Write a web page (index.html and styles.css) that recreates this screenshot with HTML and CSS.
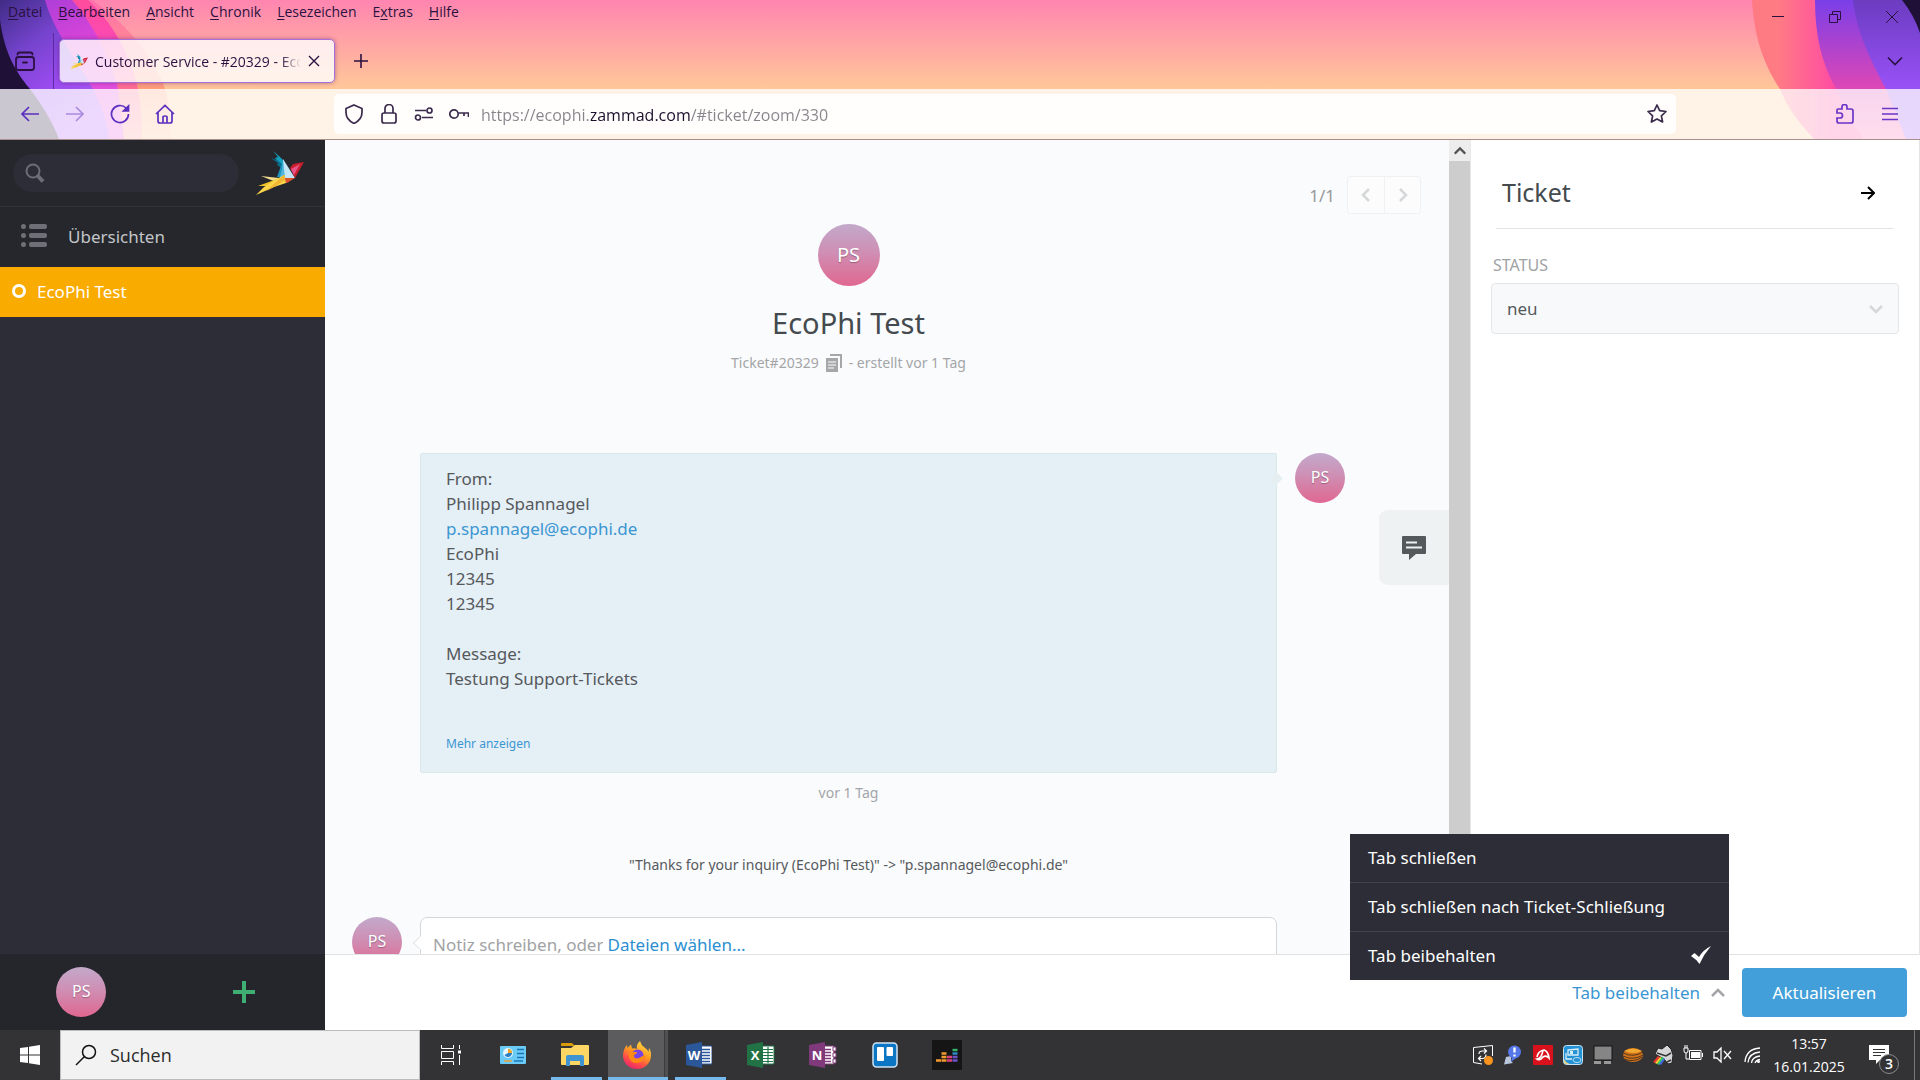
FILE: index.html
```html
<!DOCTYPE html>
<html lang="de">
  <head>
    <meta charset="utf-8" />
    <meta name="viewport" content="width=device-width,initial-scale=1.0" />
    <title>Customer Service - #20329 - EcoPhi Test</title>
    <link rel="stylesheet" href="styles.css">
  </head>
  <body>
    <svg width="0" height="0" class="sprite" aria-hidden="true">
      <symbol id="bird" viewBox="0 0 48 44">
        <path d="M17 0l6 5 5 5-1 6-8-9 3-1z" fill="#12a0be" />
        <path d="M15 7l6 2 5 4 1 5-6-4 1-2z" fill="#0a6d8c" />
        <path d="M26 12l-5 14 8 1z" fill="#1d93bd" />
        <path d="M27 8l12 19H29l-2-7z" fill="#c3e6f6" />
        <path d="M27 8l2 19-5-1 2-8z" fill="#4fb6dc" />
        <path d="M48 11l-11 2-3 4 5 10z" fill="#c81f2c" />
        <path d="M44 13l-9 5 3 6z" fill="#e8548a" />
        <path d="M29 27h10l-8 5-5 0z" fill="#d9522b" />
        <path d="M5 25l18 2-3 4z" fill="#f3dc8d" />
        <path d="M2 35l19-7 8-4-1 5-9 6z" fill="#f0c52b" />
        <path d="M28 24l2 8-12 4L0 44l8-8z" fill="#fbd54a" />
        <path d="M28 24l1 5-9 6-10 5 9-8z" fill="#f2b534" />
      </symbol>
      <symbol id="chevron" viewBox="0 0 16 16">
        <path d="M2 5l6 6 6-6" fill="none" stroke="currentColor" stroke-width="2.5" />
      </symbol>
    </svg>

    <header class="browser">
      <svg class="art art-left" width="200" height="139" viewBox="0 0 200 139" aria-hidden="true">
        <defs>
          <linearGradient id="l1" x1="0" y1="0" x2="0" y2="1">
            <stop offset="0" stop-color="#ff6fae" />
            <stop offset=".65" stop-color="#ffa07a" />
            <stop offset="1" stop-color="#ffbd8c" />
          </linearGradient>
          <linearGradient id="l2" x1="0" y1="0" x2="0" y2="1">
            <stop offset="0" stop-color="#ff4c9c" />
            <stop offset=".3" stop-color="#fb49b4" />
            <stop offset=".65" stop-color="#ff7094" />
            <stop offset="1" stop-color="#ffa09c" />
          </linearGradient>
          <linearGradient id="l3" x1=".5" y1="0" x2=".8" y2="1">
            <stop offset="0" stop-color="#b23fd8" />
            <stop offset=".35" stop-color="#dd45d8" />
            <stop offset="1" stop-color="#e85ae0" />
          </linearGradient>
          <linearGradient id="l4" x1="0" y1="0" x2=".6" y2="1">
            <stop offset="0" stop-color="#3f2c86" />
            <stop offset=".35" stop-color="#7443cc" />
            <stop offset=".65" stop-color="#9a4bee" />
            <stop offset="1" stop-color="#ae5cf4" />
          </linearGradient>
        </defs>
        <path d="M0 0h92c30 20 62 55 73 89 4 15 6 30 6 50H0z" fill="url(#l1)" />
        <path d="M0 0h88c22 20 42 52 50 89 3 16 4 32 4 50H0z" fill="url(#l2)" />
        <path d="M0 0h72c18 20 38 55 46 89l6 50H0z" fill="url(#l3)" />
        <path d="M0 0h45c8 30 32 60 48 89 9 18 14 34 16 50H0z" fill="url(#l4)" />
        <path d="M0 20c4 30 14 50 30 69 12 16 22 32 29 50H0z" fill="#1f1038" />
      </svg>
      <svg class="art art-right" width="200" height="139" viewBox="0 0 200 139" aria-hidden="true">
        <defs>
          <linearGradient id="r1" x1="0" y1="0" x2="1" y2="0">
            <stop offset=".15" stop-color="#ff7b84" />
            <stop offset=".5" stop-color="#ff4ba4" />
          </linearGradient>
          <linearGradient id="r2" x1="0" y1="0" x2="0" y2="1">
            <stop offset="0" stop-color="#7a3fe8" />
            <stop offset=".6" stop-color="#d846b8" />
            <stop offset="1" stop-color="#ff6cb0" />
          </linearGradient>
          <linearGradient id="r3" x1="0" y1="0" x2="0" y2="1">
            <stop offset="0" stop-color="#6b3cc0" />
            <stop offset=".6" stop-color="#9650f4" />
            <stop offset="1" stop-color="#9a58f0" />
          </linearGradient>
        </defs>
        <path d="M32 0c2 34 10 62 28 89 8 20 20 35 34 50h106V0z" fill="url(#r1)" />
        <path d="M95 0c0 34 6 62 21 89 8 20 16 34 28 50h56V0z" fill="url(#r2)" />
        <path d="M133 0c4 34 18 60 33 89l20 50h14V0z" fill="url(#r3)" />
        <path d="M182 0c8 10 14 21 18 33V0z" fill="#1f1038" />
      </svg>

      <div class="menubar">
        <nav class="menus">
          <a href="#"><u>D</u>atei</a>
          <a href="#"><u>B</u>earbeiten</a>
          <a href="#"><u>A</u>nsicht</a>
          <a href="#"><u>C</u>hronik</a>
          <a href="#"><u>L</u>esezeichen</a>
          <a href="#">E<u>x</u>tras</a>
          <a href="#"><u>H</u>ilfe</a>
        </nav>
        <div class="window-buttons">
          <button type="button" aria-label="Minimieren">
            <svg width="14" height="14" viewBox="0 0 14 14"><path d="M1 6.500h12" stroke="currentColor" /></svg>
          </button>
          <button type="button" aria-label="Verkleinern">
            <svg width="14" height="14" viewBox="0 0 14 14"><path d="M1.500 4.500h8v8h-8zM4.500 4.500v-3h8v8h-3" fill="none" stroke="currentColor" /></svg>
          </button>
          <button type="button" aria-label="Schließen">
            <svg width="14" height="14" viewBox="0 0 14 14"><path d="M1 1l12 12M13 1L1 13" stroke="currentColor" /></svg>
          </button>
        </div>
      </div>

      <div class="tabbar">
        <button type="button" class="recent" aria-label="Tabs">
          <svg width="20" height="20" viewBox="0 0 20 20" fill="none" stroke="currentColor" stroke-width="1.800" stroke-linecap="round">
            <path d="M2.500 3.500q0-2 2-2h11q2 0 2 2M8 11.500h4" />
            <rect x="1" y="6" width="18" height="13" rx="2.500" />
          </svg>
        </button>
        <div class="tab">
          <svg width="18" height="17"><use href="#bird" /></svg>
          <span class="tab-title">Customer Service - #20329 - EcoPhi Test</span>
          <button type="button" aria-label="Tab schließen">
            <svg width="12" height="12" viewBox="0 0 12 12"><path d="M1 1l10 10M11 1L1 11" stroke="currentColor" stroke-width="1.400" /></svg>
          </button>
        </div>
        <button type="button" class="new-tab" aria-label="Neuer Tab">
          <svg width="16" height="16" viewBox="0 0 16 16"><path d="M8 1v14M1 8h14" stroke="currentColor" stroke-width="1.600" /></svg>
        </button>
        <button type="button" class="all-tabs" aria-label="Alle Tabs">
          <svg width="18" height="18" viewBox="0 0 18 18"><path d="M2 5.500l7 7 7-7" fill="none" stroke="currentColor" stroke-width="1.600" /></svg>
        </button>
      </div>

      <div class="toolbar">
        <div class="nav-buttons">
          <button type="button" aria-label="Zurück">
            <svg width="20" height="20" viewBox="0 0 20 20"><path d="M19 10H2M9 3l-7 7 7 7" /></svg>
          </button>
          <button type="button" class="faded" aria-label="Vor">
            <svg width="20" height="20" viewBox="0 0 20 20"><path d="M1 10h17M11 3l7 7-7 7" /></svg>
          </button>
          <button type="button" aria-label="Neu laden">
            <svg width="20" height="20" viewBox="0 0 20 20"><path d="M18.500 10A8.500 8.500 0 1 1 16 4l2 2" /><path d="M18.500 2v5h-5z" fill="currentColor" /></svg>
          </button>
          <button type="button" aria-label="Startseite">
            <svg width="20" height="20" viewBox="0 0 20 20"><path d="M1 10l9-8.500L19 10M3 8.500V17q0 2 2 2h10q2 0 2-2V8.500M8 19v-6q0-1 2-1t2 1v6" /></svg>
          </button>
        </div>
        <div class="urlbar">
          <svg width="20" height="20" viewBox="0 0 20 20"><path d="M10 1l8 3.500v4C18 14 14 17.500 10 19.500 6 17.500 2 14 2 8.500v-4z" /></svg>
          <svg width="20" height="20" viewBox="0 0 20 20"><rect x="3" y="9" width="14" height="10" rx="2" /><path d="M6 9V4.500a4 4 0 0 1 8 0V9" /></svg>
          <svg width="20" height="20" viewBox="0 0 20 20"><path d="M1 6.500h11M8 13.500h11" /><circle cx="15.500" cy="6.500" r="2.500" /><circle cx="4" cy="13.500" r="2.500" /></svg>
          <svg width="20" height="20" viewBox="0 0 20 20"><circle cx="5" cy="10" r="4.200" /><path d="M9.500 9h10v4M15 9v3" /></svg>
          <input type="text" class="url" aria-label="Adresse" value="https://ecophi.zammad.com/#ticket/zoom/330">
          <svg width="20" height="20" viewBox="0 0 20 20"><path d="M10 1l2.700 5.700 6.300.8-4.600 4.300 1.200 6.200L10 15l-5.600 3 1.200-6.200L1 7.500l6.300-.8z" stroke-linejoin="round" /></svg>
        </div>
        <div class="tool-buttons">
          <button type="button" aria-label="Erweiterungen">
            <svg width="20" height="20" viewBox="0 0 20 20"><path d="M3 5h4V3a2.500 2.500 0 0 1 5 0v2h4q2 0 2 2v10q0 2-2 2H4q-2 0-2-2v-3h3a2 2 0 0 0 0-5H2V6q0-1 1-1z" /></svg>
          </button>
          <button type="button" aria-label="Menü">
            <svg width="16" height="16" viewBox="0 0 16 16"><path d="M0 2.500h16M0 8h16M0 13.500h16" /></svg>
          </button>
        </div>
      </div>
    </header>

    <div class="app">
      <aside class="sidebar">
        <div class="search-row">
          <label class="search">
            <svg width="20" height="20" viewBox="0 0 20 20"><circle cx="8" cy="8" r="6.500" fill="none" stroke="currentColor" stroke-width="2" /><path d="M12 12l6 6.500" stroke="currentColor" stroke-width="4" /></svg>
            <input type="search" aria-label="Suche">
          </label>
          <svg width="48" height="44"><use href="#bird" /></svg>
        </div>
        <a class="overview" href="#">
          <svg width="26" height="24" viewBox="0 0 26 24" fill="currentColor">
            <rect y="0" width="5" height="5" rx="2.500" /><rect x="8" y="0" width="18" height="5" rx="2" />
            <rect y="9" width="5" height="5" rx="2.500" /><rect x="8" y="9" width="18" height="5" rx="2" />
            <rect y="18" width="5" height="5" rx="2.500" /><rect x="8" y="18" width="18" height="5" rx="2" />
          </svg>
          Übersichten
        </a>
        <a class="task" href="#"><span class="ring"></span>EcoPhi Test</a>
        <div class="sidebar-footer">
          <span class="avatar">PS</span>
          <button type="button" aria-label="Neu">
            <svg width="22" height="22" viewBox="0 0 22 22"><path d="M11 0v22M0 11h22" stroke="#3fae72" stroke-width="4" /></svg>
          </button>
        </div>
      </aside>

      <div class="workspace">
        <div class="columns">
          <main class="ticket">
            <div class="pager">
              <span>1/1</span>
              <div class="pager-buttons">
                <button type="button" aria-label="Vorheriges"><svg width="16" height="16" class="turn-right"><use href="#chevron" /></svg></button>
                <button type="button" aria-label="Nächstes"><svg width="16" height="16" class="turn-left"><use href="#chevron" /></svg></button>
              </div>
            </div>
            <div class="ticket-head">
              <span class="avatar large">PS</span>
              <h1>EcoPhi Test</h1>
              <p class="meta">
                Ticket#20329
                <svg width="16" height="18" viewBox="0 0 16 18"><path d="M4 0h12v14h-2V2H4z" fill="#a5a7a9" /><path d="M0 4h12v14H0z" fill="#a5a7a9" /><path d="M2 8h8M2 11h8M2 14h6" stroke="#fff" /></svg>
                - erstellt vor 1 Tag
              </p>
            </div>
            <div class="article">
              <div class="bubble">
                <p>
                  From:<br>
                  Philipp Spannagel<br>
                  <a href="#">p.spannagel@ecophi.de</a><br>
                  EcoPhi<br>
                  12345<br>
                  12345<br>
                  <br>
                  Message:<br>
                  Testung Support-Tickets
                </p>
                <a class="more" href="#">Mehr anzeigen</a>
              </div>
              <span class="avatar">PS</span>
            </div>
            <p class="meta time">vor 1 Tag</p>
            <p class="notice">"Thanks for your inquiry (EcoPhi Test)" -&gt; "p.spannagel@ecophi.de"</p>
            <div class="article reply">
              <span class="avatar">PS</span>
              <div class="note">
                <input type="text" aria-label="Notiz" placeholder="Notiz schreiben, oder">
                <a href="#">Dateien wählen...</a>
              </div>
            </div>
            <button type="button" class="drawer" aria-label="Textbausteine">
              <svg width="24" height="24" viewBox="0 0 24 24"><path d="M1 0h22q1 0 1 1v16q0 1-1 1H14l-7 6v-6H1q-1 0-1-1V1q0-1 1-1z" fill="#54595c" /><path d="M4 6.500h11M4 11.500h16" stroke="#eef2f2" stroke-width="2" /></svg>
            </button>
          </main>
          <div class="scrollbar">
            <button type="button" aria-label="Nach oben"><svg width="14" height="14" class="turn-up"><use href="#chevron" /></svg></button>
          </div>
          <aside class="properties">
            <div class="properties-head">
              <h2>Ticket</h2>
              <svg width="14" height="14" viewBox="0 0 14 14"><path d="M0 7h13M7 1l6 6-6 6" fill="none" stroke="#000" stroke-width="2" /></svg>
            </div>
            <label for="state">STATUS</label>
            <div class="select">
              <select id="state"><option>neu</option></select>
              <svg width="16" height="16"><use href="#chevron" /></svg>
            </div>
          </aside>
        </div>

        <footer class="actions">
          <ul class="menu">
            <li><button type="button">Tab schließen</button></li>
            <li><button type="button">Tab schließen nach Ticket-Schließung</button></li>
            <li>
              <button type="button">Tab beibehalten
                <svg width="20" height="18" viewBox="0 0 20 18"><path d="M0 10l3.500-3L8 11Q12 4 20 0 13 8 8.500 18 5 13 0 10z" fill="#fff" /></svg>
              </button>
            </li>
          </ul>
          <a class="tab-action" href="#">Tab beibehalten <svg width="16" height="16" class="turn-up"><use href="#chevron" /></svg></a>
          <button type="button" class="submit">Aktualisieren</button>
        </footer>
      </div>
    </div>

    <footer class="taskbar">
      <button type="button" class="start" aria-label="Start">
        <svg width="20" height="20" viewBox="0 0 20 20"><path d="M0 3l8-1v7.500H0zM9 1.800L20 0v9.500H9zM0 10.500h8V18l-8-1zM9 10.500h11V20L9 18.200z" fill="#fff" /></svg>
      </button>
      <label class="win-search">
        <svg width="22" height="22" viewBox="0 0 22 22"><circle cx="14" cy="8" r="6.500" fill="none" stroke="#111" stroke-width="1.500" /><path d="M9.500 12.500L1 21" stroke="#111" stroke-width="1.500" /></svg>
        <input type="text" placeholder="Suchen">
      </label>
      <div class="pinned">
        <button type="button" aria-label="Aktive Anwendungen">
          <svg width="20" height="20" viewBox="0 0 20 20" fill="none" stroke="#fff"><path d="M.5 0v3.500h12V0M.5 20v-3.500h12V20M.5 6.500h12v7H.5zM18.500 0v4M18.500 10v10" /><path d="M17 5.500h3v3h-3z" fill="#fff" stroke="none" /></svg>
        </button>
        <button type="button" aria-label="Systemsteuerung">
          <svg width="26" height="18" viewBox="0 0 26 18"><rect width="26" height="18" rx="1" fill="#6ccbf5" /><circle cx="8" cy="7" r="5" fill="#e4f5fd" /><path d="M8 7V3a4 4 0 1 1-3.500 6z" fill="#2d7fc4" /><path d="M8 7V3a4 4 0 0 1 4 4z" fill="#f5a623" /><path d="M17 3.500h7M17 7.500h7M17 11.500h7" stroke="#1877b8" stroke-width="1.500" /><path d="M4 15h8" stroke="#e8a33a" stroke-width="1.500" /><path d="M14 15h9" stroke="#1877b8" stroke-width="1.500" /></svg>
        </button>
        <button type="button" class="running" aria-label="Explorer">
          <svg width="28" height="24" viewBox="0 0 28 24"><path d="M0 1q0-1 1-1h10l3 3H0z" fill="#d99a06" /><path d="M0 5h10l4-3h13q1 0 1 1v18q0 1-1 1H1q-1 0-1-1z" fill="#fdd663" /><path d="M5 23V14q0-2 2-2h14q2 0 2 2v9h-4v-5H9v5z" fill="#3f93d0" /></svg>
        </button>
        <button type="button" class="running current" aria-label="Firefox">
          <svg width="28" height="28" viewBox="0 0 28 28">
            <defs>
              <linearGradient id="ff" x1=".8" y1="0" x2=".3" y2="1"><stop offset="0" stop-color="#ffe14a" /><stop offset=".45" stop-color="#ff9a1f" /><stop offset=".75" stop-color="#ff4a4a" /><stop offset="1" stop-color="#e8246e" /></linearGradient>
            </defs>
            <path d="M14 28C6 28 0 22 0 14.500 0 10 2 6 4 4l.5 3L8 3.500l1 4q3-.5 5 .5-1-5 3-8 1 4 4 6 4 3 4.500 5l.5-4c2 3 2 5 2 7.500C28 22 22 28 14 28z" fill="url(#ff)" />
            <circle cx="14.500" cy="14.500" r="6" fill="#7542e5" />
            <path d="M6 12c3-2 5-1 8-1 1 2-3 2-3 4s2 3 5 2 3-3 6-2c-1 5-5 7-9 7-5 0-8-5-7-10z" fill="#ff8a16" />
          </svg>
        </button>
        <button type="button" class="running" aria-label="Word">
          <svg width="26" height="26" viewBox="0 0 26 26"><path d="M14 4h11q1 0 1 1v16q0 1-1 1H14z" fill="#fff" stroke="#2b579a" /><path d="M16 7.500h8M16 10.500h8M16 13.500h8M16 16.500h8M16 19.500h8" stroke="#2b579a" stroke-width="1.500" /><path d="M0 3l16-3v26L0 23z" fill="#2b579a" /><text x="8" y="18" class="app-letter">W</text></svg>
        </button>
        <button type="button" aria-label="Excel">
          <svg width="28" height="26" viewBox="0 0 28 26"><path d="M14 4h12q1 0 1 1v16q0 1-1 1H14z" fill="#fff" stroke="#217346" /><path d="M16 7.500h10M16 10.500h10M16 13.500h10M16 16.500h10M16 19.500h10M21 5v16" stroke="#217346" stroke-width="1.200" /><path d="M0 3l16-3v26L0 23z" fill="#217346" /><text x="8" y="18" class="app-letter">X</text></svg>
        </button>
        <button type="button" aria-label="OneNote">
          <svg width="28" height="26" viewBox="0 0 28 26"><path d="M14 4h11v18H14z" fill="#fff" stroke="#80397b" /><path d="M16 7.500h6M16 10.500h6M16 13.500h6M16 16.500h6M16 19.500h6" stroke="#80397b" stroke-width="1.500" /><path d="M24 5h3v4h-3zM24 11h3v4h-3zM24 17h3v4h-3z" fill="#fff" stroke="#80397b" /><path d="M0 3l16-3v26L0 23z" fill="#80397b" /><text x="8" y="18" class="app-letter">N</text></svg>
        </button>
        <button type="button" aria-label="Trello">
          <svg width="26" height="26" viewBox="0 0 26 26"><rect x="1" y="1" width="24" height="24" rx="3.500" fill="#0a76c4" stroke="#cfe5f5" stroke-width="1.500" /><rect x="5" y="5" width="7" height="14" rx="1" fill="#fff" /><rect x="14.500" y="5" width="6.500" height="9" rx="1" fill="#fff" /></svg>
        </button>
        <button type="button" aria-label="Deezer">
          <svg width="30" height="30" viewBox="0 0 30 30"><path d="M0 0h30v30H0z" fill="#151515" /><g stroke-width="2.400"><path d="M4 20.500h5M9.500 20.500h5M9.500 17h5M9.500 13.500h5" stroke="#f29a2e" /><path d="M15 20.500h5M15 17h5" stroke="#d8437c" /><path d="M20.500 20.500h5M20.500 17h5" stroke="#6c52c8" /><path d="M20.500 13.500h5" stroke="#2e8fd0" /><path d="M20.500 10h5" stroke="#35b56a" /></g></svg>
        </button>
      </div>
      <div class="tray">
        <svg viewBox="0 0 20 20"><path d="M9 19l-8.500-1.500v-15l19-2V11" fill="none" stroke="#fff" /><path d="M6 9q0-3 3.500-3H13M11 3.500L13.500 6 11 8.500M13 9.500q0 4-3.500 4H6M8 11l-2.500 2.500L8 16" fill="none" stroke="#fff" stroke-width="1.200" /><circle cx="15.500" cy="15.500" r="4.500" fill="#f7931e" /></svg>
        <svg viewBox="0 0 20 20"><path d="M3 12l5-1v5l2 2-9 1.500z" fill="#b9c6de" /><circle cx="11.500" cy="7" r="6.500" fill="#5577e8" /><path d="M9 12l-1 5 5-4z" fill="#5577e8" /><path d="M11.500 2.500v5M11.500 9.500v2" stroke="#fff" stroke-width="2.300" /></svg>
        <svg viewBox="0 0 20 20"><rect width="20" height="20" rx="1" fill="#d8111c" /><path d="M4 12q1-6 7-7 4 1 5 8-3-3-6-1-3 4-6 2 5-1 6-9" fill="none" stroke="#fff" stroke-width="1.700" /></svg>
        <svg viewBox="0 0 20 20"><rect x=".5" y=".5" width="19" height="19" rx="3" fill="#2492d4" stroke="#c7e4f6" /><path d="M5 5l10-1v6H5zM3 8v6h6" fill="none" stroke="#d7edf9" stroke-width="1.300" /><path d="M7 6h3v3H7z" fill="#d7edf9" /><ellipse cx="14" cy="15" rx="4" ry="2.500" fill="#2492d4" stroke="#b8def4" /><path d="M1 14q2 4 6 5H3q-2 0-2-2z" fill="#e8d98a" /></svg>
        <svg viewBox="0 0 20 20"><path d="M1 1h18v14H1z" fill="#858585" stroke="#151515" /><path d="M1 16h7v3H1zM11 16h7v3h-7z" fill="#999" /></svg>
        <svg viewBox="0 0 20 20"><ellipse cx="10" cy="10" rx="10" ry="7" fill="#d0731c" /><path d="M1 6q9-5 18 0-8 4-18 0z" fill="#f3a82e" /><path d="M0 8q10 5 20-1M0 11q10 5 20-1M1 14q10 4 18-2" fill="none" stroke="#573818" stroke-width="1" /></svg>
        <svg viewBox="0 0 20 20"><path d="M5 3l4 1 5-4 4 4 2 6-1 8-4 1-4-5L2 9z" fill="#d5d5d8" stroke="#222" /><path d="M4 8l9 3 5-3M14 17l4-2" fill="none" stroke="#333" stroke-width="1.500" /><path d="M5 11l-5 6 2 1 5-6z" fill="#e33" /><path d="M7 12l-5 6 2 1 5-6z" fill="#fc3" /><path d="M9 12l-5 7 2 1 5-7z" fill="#3c6" /><path d="M11 13l-5 6 2 1 4-6z" fill="#46e" /></svg>
        <svg viewBox="0 0 20 20" fill="none" stroke="#fff"><path d="M1 3v3q0 2 2 2t2-2V3zM2 3V0M4 3V0M3 8v6h3" /><path d="M6.500 5.500h11.500v9H6.500zM19.500 8v4" /><path d="M8 7h9v6H8z" fill="#fff" stroke="none" /></svg>
        <svg viewBox="0 0 20 20" fill="none" stroke="#fff"><path d="M1 7h3l4-4v14l-4-4H1zM11 6l7 8M18 6l-7 8" stroke-width="1.300" /></svg>
        <svg viewBox="0 0 20 20" fill="none" stroke="#fff"><path d="M2 17Q3 4 17 3M5 17.500Q6 8 17 7M8.500 18Q9 12 17 11M12 18q1-3 5-3.500" stroke-width="1.300" /><circle cx="15.500" cy="16.500" r="1.500" fill="#fff" stroke="none" /></svg>
      </div>
      <div class="clock"><span>13:57</span><span>16.01.2025</span></div>
      <button type="button" class="notifications" aria-label="Benachrichtigungen">
        <svg width="20" height="20" viewBox="0 0 20 20"><path d="M0 0h20v15h-9l-4 4v-4H0z" fill="#fff" /><path d="M4 4.500h12M4 7.500h12M4 10.500h8" stroke="#333" /></svg>
        <span class="badge">3</span>
      </button>
    </footer>
  </body>
</html>
```
FILE: styles.css
```css
* {
  box-sizing: border-box;
}
body {
  margin: 0;
  height: 100vh;
  display: flex;
  flex-direction: column;
  overflow: hidden;
  font-family: "Noto Sans", "Open Sans", sans-serif;
  font-size: 16px;
  color: #55595c;
}
a {
  color: #3b96d2;
  text-decoration: none;
}
button {
  border: none;
  padding: 0;
  background: none;
  font: inherit;
  color: inherit;
}
input,
select {
  border: none;
  outline: none;
  padding: 0;
  background: none;
  font: inherit;
  color: inherit;
}
p,
h1,
h2,
ul {
  margin: 0;
  padding: 0;
  font-weight: 400;
}
svg {
  flex: none;
  display: block;
}
.sprite {
  position: absolute;
}
.turn-up {
  transform: rotate(180deg);
}
.turn-left {
  transform: rotate(-90deg);
}
.turn-right {
  transform: rotate(90deg);
}

/* browser window */
.browser {
  position: relative;
  flex: none;
  background: linear-gradient(#ff85b0, #ffc799 89px);
  border-bottom: 1px solid #a98f8c;
  color: #2b1140;
  font-family: "Open Sans", "Noto Sans", sans-serif;
}
.browser > div {
  position: relative;
}
.art {
  position: absolute;
  top: 0;
}
.art-left {
  left: 0;
}
.art-right {
  right: 0;
}
.menubar {
  display: flex;
  justify-content: space-between;
  height: 33px;
}
.menus {
  display: flex;
  gap: 16px;
  padding-left: 8px;
  font-size: 14px;
  line-height: 24px;
}
.menus a {
  color: inherit;
}
.menus u {
  text-underline-offset: 2px;
}
.window-buttons {
  display: flex;
}
.window-buttons button {
  width: 57px;
  display: flex;
  justify-content: center;
  align-items: center;
}
.tabbar {
  display: flex;
  align-items: center;
  height: 56px;
}
.recent {
  height: 100%;
  width: 54px;
  padding-left: 15px;
  border-right: 1px solid #5b2aa0;
}
.tab {
  display: flex;
  align-items: center;
  gap: 7px;
  width: 276px;
  height: 44px;
  margin-left: 5px;
  padding: 0 14px 0 10px;
  border: 1px solid #a76fd8;
  border-radius: 5px;
  background: rgba(255, 255, 255, 0.8);
  box-shadow: 0 0 4px rgba(90, 30, 120, 0.5);
  font-size: 14px;
}
.tab-title {
  flex: 1;
  overflow: hidden;
  white-space: nowrap;
  mask-image: linear-gradient(to left, transparent, #000 20px);
}
.new-tab {
  margin-left: 18px;
}
.all-tabs {
  margin-left: auto;
  margin-right: 16px;
}
.toolbar {
  display: flex;
  align-items: center;
  height: 50px;
  background: rgba(255, 255, 255, 0.77);
}
.toolbar svg {
  fill: none;
  stroke: currentColor;
  stroke-width: 1.7;
}
.nav-buttons {
  display: flex;
  gap: 25px;
  width: 334px;
  padding-left: 20px;
  color: #5b2fc0;
}
.faded {
  opacity: 0.45;
}
.urlbar {
  flex: 1;
  display: flex;
  align-items: center;
  gap: 15px;
  height: 40px;
  padding: 0 9px 0 10px;
  border-radius: 5px;
  background: rgba(255, 255, 255, 0.88);
  color: #3a2a4c;
}
/* host name is darker than the rest of the address */
.url {
  flex: 1;
  height: 38px;
  margin-left: -3px;
  padding-top: 2px;
  font-size: 16px;
  color: transparent;
  background: linear-gradient(to right, #88848c 110px, #1b0f2b 110px, #1b0f2b 209px, #88848c 209px);
  -webkit-background-clip: text;
  background-clip: text;
}
.tool-buttons {
  display: flex;
  align-items: center;
  justify-content: flex-end;
  gap: 27px;
  width: 244px;
  padding-right: 22px;
  color: #6a35c8;
}

/* zammad */
.app {
  flex: 1;
  min-height: 0;
  display: flex;
}
.avatar {
  flex: none;
  width: 50px;
  height: 50px;
  border-radius: 50%;
  background: linear-gradient(#c2a9cb, #cf8fb4 45%, #e06790);
  color: #fff;
  text-align: center;
  line-height: 48px;
  font-size: 16px;
  text-shadow: 0 1px 1px rgba(0, 0, 0, 0.3);
}
.avatar.large {
  width: 62px;
  height: 62px;
  line-height: 62px;
  font-size: 20px;
}
.sidebar {
  width: 325px;
  flex: none;
  display: flex;
  flex-direction: column;
  background: #2c2d36;
}
.search-row {
  display: flex;
  align-items: center;
  gap: 17px;
  height: 67px;
  padding-left: 13px;
  background: #25272c;
  border-bottom: 1px solid #303238;
}
.search {
  display: flex;
  align-items: center;
  width: 226px;
  height: 38px;
  padding: 0 12px;
  border-radius: 19px;
  background: #2c2d36;
  color: #6b6e75;
}
.search input {
  width: 100%;
}
.overview {
  display: flex;
  align-items: center;
  gap: 21px;
  height: 60px;
  padding: 0 0 2px 21px;
  background: #25272c;
  color: #c3c5c8;
  font-size: 17px;
}
.overview svg {
  color: #6d7076;
}
.task {
  display: flex;
  align-items: center;
  gap: 11px;
  height: 50px;
  padding: 0 0 2px 12px;
  background: #faab00;
  color: #fff;
  font-size: 17px;
}
.ring {
  width: 14px;
  height: 14px;
  border: 3px solid #fff;
  border-radius: 50%;
}
.sidebar-footer {
  display: grid;
  grid-template-columns: 1fr 1fr;
  place-items: center;
  height: 76px;
  margin-top: auto;
  background: #25262c;
}
.workspace {
  flex: 1;
  min-width: 0;
  display: flex;
  flex-direction: column;
}
.columns {
  flex: 1;
  min-height: 0;
  display: flex;
}
.ticket {
  position: relative;
  flex: 1;
  overflow: hidden;
  padding: 36px 104px 0 27px;
  background: #fafbfd;
}
.pager {
  display: flex;
  justify-content: flex-end;
  align-items: center;
  gap: 12px;
  margin-right: -76px;
  color: #96999c;
  font-size: 17px;
}
.pager-buttons {
  display: flex;
  border: 1px solid #f0f1f2;
  border-radius: 3px;
  background: #fcfcfc;
  color: #d5d7d8;
}
.pager-buttons button {
  display: grid;
  place-items: center;
  width: 36px;
  height: 36px;
}
.pager-buttons button + button {
  border-left: 1px solid #f0f1f2;
}
.ticket-head {
  display: flex;
  flex-direction: column;
  align-items: center;
  margin-top: 10px;
}
.ticket-head h1 {
  margin-top: 15px;
  font-size: 29px;
  line-height: 44px;
  color: #444a4e;
}
.meta {
  display: flex;
  justify-content: center;
  align-items: center;
  gap: 7px;
  font-size: 14px;
  line-height: 20px;
  color: #a3a5a8;
}
.ticket-head .meta {
  margin-top: 8px;
}
.article {
  display: grid;
  grid-template-columns: 50px 1fr 50px;
  gap: 18px;
  margin-top: 80px;
}
.bubble {
  position: relative;
  grid-column: 2;
  padding: 12px 25px 16px;
  border: 1px solid #d9e7e9;
  border-radius: 2px;
  background: #e5eff6;
  font-size: 17px;
  line-height: 25px;
}
.bubble::after {
  content: "";
  position: absolute;
  right: -5px;
  top: 20px;
  width: 9px;
  height: 9px;
  background: #e5eff2;
  transform: rotate(45deg);
}
.more {
  display: block;
  margin-top: 40px;
  font-size: 12px;
}
.time {
  margin-top: 10px;
}
.notice {
  margin-top: 52px;
  text-align: center;
  font-size: 14px;
  line-height: 20px;
}
.reply {
  margin-top: 42px;
}
.note {
  position: relative;
  display: flex;
  gap: 4px;
  height: 80px;
  padding: 14px 12px;
  border: 1px solid #d3d6da;
  border-radius: 7px;
  background: #fff;
  font-size: 17px;
  line-height: 25px;
}
.note::before {
  content: "";
  position: absolute;
  left: -6px;
  top: 20px;
  width: 9px;
  height: 9px;
  border: 1px solid #e3e5e8;
  border-width: 0 0 1px 1px;
  background: #fff;
  transform: rotate(45deg);
}
.note input {
  field-sizing: content;
  height: 25px;
}
.note input::placeholder {
  color: #a1a3a5;
}
.note a {
  color: #2b8fd0;
}
.drawer {
  position: absolute;
  right: 0;
  top: 370px;
  display: grid;
  place-items: center;
  width: 70px;
  height: 75px;
  border-radius: 9px 0 0 9px;
  background: #eef2f2;
}
.scrollbar {
  flex: none;
  width: 21px;
  background: #cdcdcd;
}
.scrollbar button {
  display: grid;
  place-items: center;
  width: 100%;
  height: 21px;
  background: #ededed;
  color: #555;
}
.properties {
  flex: none;
  width: 450px;
  padding: 18px 20px;
  border-left: 1px solid #e8e8e8;
  border-right: 1px solid #e3e3e3;
  background: #fff;
}
.properties-head {
  display: flex;
  align-items: center;
  justify-content: space-between;
  height: 71px;
  margin: 0 6px 0 5px;
  padding: 0 18px 0 6px;
  border-bottom: 1px solid #e1e3e4;
}
.properties-head h2 {
  font-size: 25px;
  line-height: 40px;
  padding-bottom: 2px;
  color: #444a4e;
}
.properties label {
  display: block;
  margin: 24px 2px 6px;
  font-size: 16px;
  line-height: 24px;
  color: #a0a2a5;
}
.select {
  display: flex;
  align-items: center;
  height: 51px;
  padding: 0 14px 0 15px;
  border: 1px solid #e4e6e7;
  border-radius: 4px;
  background: #f8f9fb;
}
.select select {
  flex: 1;
  appearance: none;
  font-size: 17px;
}
.select svg {
  color: #d5d7d8;
}
.actions {
  position: relative;
  flex: none;
  display: flex;
  justify-content: flex-end;
  align-items: center;
  gap: 16px;
  height: 76px;
  padding-right: 13px;
  border-top: 1px solid #e0e2e4;
  background: #fff;
  font-size: 17px;
}
.menu {
  position: absolute;
  right: 191px;
  bottom: 50px;
  width: 379px;
  list-style: none;
  background: #2c2d36;
  color: #fff;
}
.menu li + li {
  border-top: 1px solid #42434c;
}
.menu button {
  display: flex;
  justify-content: space-between;
  align-items: center;
  width: 100%;
  height: 48px;
  padding: 0 18px 2px;
}
.tab-action {
  display: flex;
  align-items: center;
  gap: 10px;
}
.tab-action svg {
  color: #a3a5a8;
}
.submit {
  width: 165px;
  height: 49px;
  border-radius: 4px;
  background: #429fd9;
  color: #fff;
}

/* windows taskbar */
.taskbar {
  flex: none;
  display: flex;
  height: 50px;
  padding-right: 5px;
  background: #333335;
  color: #fff;
  font-family: "Open Sans", "Noto Sans", sans-serif;
}
.start {
  display: grid;
  place-items: center;
  width: 60px;
}
.win-search {
  display: flex;
  align-items: center;
  gap: 13px;
  width: 360px;
  padding: 0 14px;
  border: 1px solid #bcbcbc;
  background: #f2f2f2;
}
.win-search input {
  width: 100%;
  font-size: 18px;
}
.win-search input::placeholder {
  color: #2b2b2b;
}
.pinned {
  display: flex;
}
.pinned button {
  display: grid;
  place-items: center;
  position: relative;
  width: 62px;
}
.running::after {
  content: "";
  position: absolute;
  left: 7px;
  right: 4px;
  bottom: 0;
  height: 3px;
  background: #76b9ed;
}
.pinned .current {
  background: linear-gradient(to right, transparent 2px, #5c5c5e 2px, #5c5c5e 58px, #3b3b3d 58px, #3b3b3d 59px, #505052 59px);
}
.current::after {
  left: 2px;
  right: 0;
}
.app-letter {
  fill: #fff;
  font-size: 13px;
  font-weight: 700;
  text-anchor: middle;
}
.tray {
  display: flex;
  align-items: center;
  gap: 10px;
  margin-left: auto;
}
.tray svg {
  width: 20px;
  height: 20px;
}
.clock {
  display: flex;
  flex-direction: column;
  justify-content: center;
  align-items: center;
  width: 92px;
  font-size: 14px;
  line-height: 23px;
}
.notifications {
  position: relative;
  width: 60px;
  padding: 0 20px 0 14px;
  border-right: 1px solid #77777a;
}
.badge {
  position: absolute;
  left: 24px;
  top: 24px;
  width: 20px;
  height: 20px;
  border: 1px solid #8b8b8d;
  border-radius: 50%;
  background: #333335;
  font-size: 14px;
  font-weight: 600;
  line-height: 18px;
}
```
